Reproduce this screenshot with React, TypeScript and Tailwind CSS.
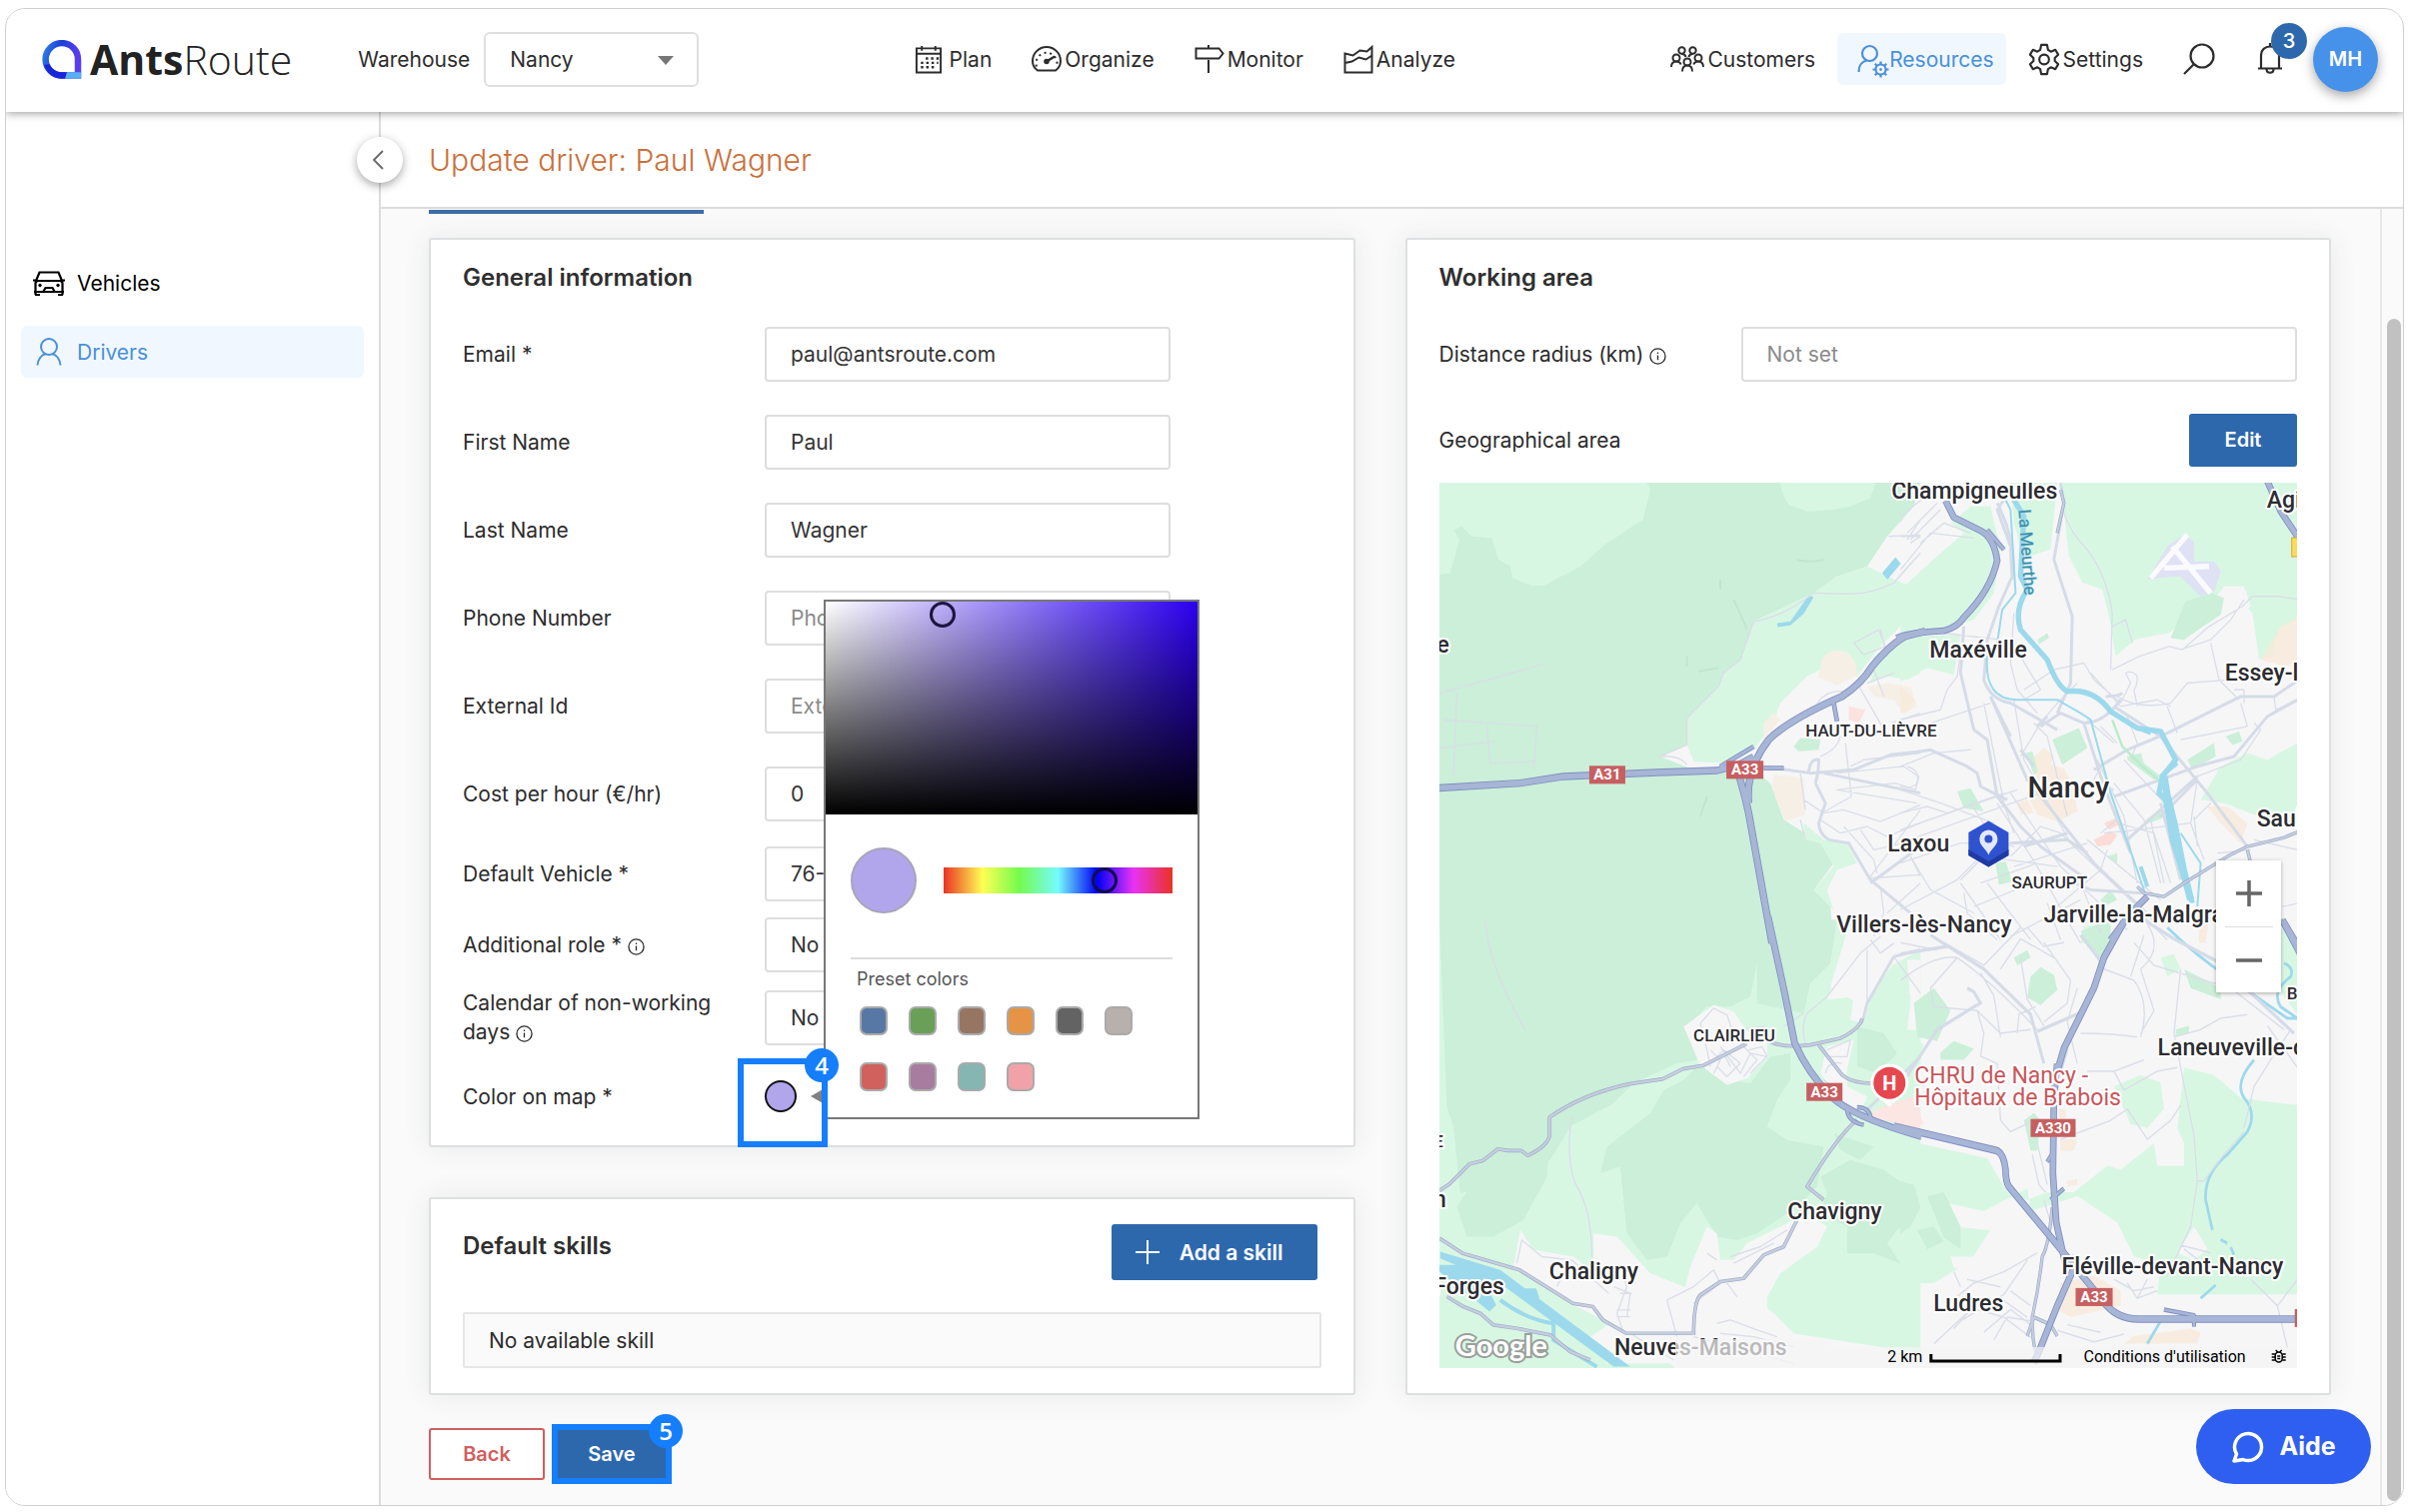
import React from "react";

type IconProps = { className?: string };

function CalendarIcon({ className }: IconProps) {
  return (
    <svg viewBox="0 0 28 30" className={className} fill="none" stroke="currentColor" strokeWidth="2">
      <path d="M1.5 3.5h25v25h-25zM1.5 9h25M7 1v5M21 1v5" />
      <path d="M11 14h14M6 18.500h18M6 23h14" strokeDasharray="2.500 3" strokeWidth="2.500" />
    </svg>
  );
}

function GaugeIcon({ className }: IconProps) {
  return (
    <svg viewBox="0 0 30 26" className={className} fill="none" stroke="currentColor" strokeWidth="2">
      <path d="M6 24.500C2.500 22 1 18.500 1 15a14 14 0 0 1 28 0c0 3.500-1.500 7-5 9.500z" />
      <path d="M5 20.500a10.500 10.500 0 1 1 20 0" strokeDasharray="2 3.700" />
      <path d="M15 15.500 23 10.500" strokeWidth="2.500" />
      <circle cx="15" cy="15.500" r="1.800" fill="currentColor" />
    </svg>
  );
}

function SignpostIcon({ className }: IconProps) {
  return (
    <svg viewBox="0 0 30 28" className={className} fill="none" stroke="currentColor" strokeWidth="2">
      <path d="M1.500 3.500h23l4 5-4 5h-23zM14 0v3.500M14 15v13" />
    </svg>
  );
}

function AreaChartIcon({ className }: IconProps) {
  return (
    <svg viewBox="0 0 30 30" className={className} fill="none" stroke="currentColor" strokeWidth="2">
      <path d="M1.500 9.500v19h27V3l-5 4.500-7-1-7 5zM1.500 19l7-1.500 7-4 7 2 6-4" />
    </svg>
  );
}

function PeopleIcon({ className }: IconProps) {
  return (
    <svg viewBox="0 0 34 26" className={className} fill="none" stroke="currentColor" strokeWidth="2">
      <circle cx="11.500" cy="4.500" r="3.200" />
      <circle cx="22.500" cy="4.500" r="3.200" />
      <circle cx="6" cy="12" r="3.500" />
      <circle cx="28" cy="12" r="3.500" />
      <circle cx="17" cy="16" r="3.500" />
      <path d="M1 21c0-3.500 2-5.500 5-5.500 2.200 0 4 1.200 4.700 3M33 21c0-3.500-2-5.500-5-5.500-2.200 0-4 1.200-4.700 3M12 25.500c0-4 2-6 5-6s5 2 5 6M11.500 8c1.800 0 3.500.8 4 3M22.500 8c-1.800 0-3.500.8-4 3" />
    </svg>
  );
}

function PersonGearIcon({ className }: IconProps) {
  return (
    <svg viewBox="0 0 32 34" className={className} fill="none" stroke="currentColor" strokeWidth="2.200">
      <circle cx="12.500" cy="9.500" r="7.500" />
      <path d="M1.500 28c0-6 3-10.500 8-11.500" />
      <circle cx="23.500" cy="25.500" r="5" />
      <circle cx="23.500" cy="25.500" r="1" fill="currentColor" strokeWidth="1" />
      <path d="M23.500 17.500v3M23.500 30.500v3M15.500 25.500h3M28.500 25.500h3M17.800 19.800l2.200 2.200M27 29l2.200 2.200M29.200 19.800 27 22M20 29l-2.200 2.200" />
    </svg>
  );
}

function GearIcon({ className }: IconProps) {
  return (
    <svg viewBox="0 0 32 34" className={className} fill="none" stroke="currentColor" strokeWidth="2.200" strokeLinejoin="round">
      <path d="M13 2h6l1 5 3 2 4.500-2 3 5-3.500 3.500v3L30.500 22l-3 5-4.500-2-3 2-1 5h-6l-1-5-3-2-4.500 2-3-5L5 18.500v-3L1.500 12l3-5L9 9l3-2z" />
      <circle cx="16" cy="17" r="5" />
    </svg>
  );
}

function SearchIcon({ className }: IconProps) {
  return (
    <svg viewBox="0 0 32 32" className={className} fill="none" stroke="currentColor" strokeWidth="2.200">
      <circle cx="19" cy="13" r="11.500" />
      <path d="M10.500 21.500 1 31" />
    </svg>
  );
}

function BellIcon({ className }: IconProps) {
  return (
    <svg viewBox="0 0 26 32" className={className} fill="none" stroke="currentColor" strokeWidth="2.200">
      <path d="M1 25.500h24M4 25.500V12c0-5 4-8.500 9-8.500s9 3.500 9 8.500v13.500M13 0v3.500M9.500 26c0 5 7 5 7 0" />
    </svg>
  );
}

function CarIcon({ className }: IconProps) {
  return (
    <svg viewBox="0 0 32 25" className={className} fill="none" stroke="currentColor" strokeWidth="2.200">
      <path d="M0 9.500h4M28 9.500h4M3 10 6.500 1.500h19L29 10zM2.500 24V12L4 10h24l1.500 2v12M1 21h30M2 24h5M25 24h5" />
      <path d="M10.500 20.500l2-3.500h7l2 3.500" />
      <circle cx="7" cy="14.500" r="1.300" fill="currentColor" strokeWidth="1" />
      <circle cx="25" cy="14.500" r="1.300" fill="currentColor" strokeWidth="1" />
    </svg>
  );
}

function PersonIcon({ className }: IconProps) {
  return (
    <svg viewBox="0 0 26 28" className={className} fill="none" stroke="currentColor" strokeWidth="2">
      <circle cx="13" cy="9" r="8" />
      <path d="M1.500 27.500c.5-6 4-10.500 8.500-11.500M24.500 27.500c-.5-6-4-10.500-8.500-11.500" />
    </svg>
  );
}

function InfoIcon() {
  return (
    <svg viewBox="0 0 18 18" className="ml-[6px] inline-block h-[17px] w-[17px]" fill="none" stroke="currentColor" strokeWidth="1.400">
      <circle cx="9" cy="9" r="8" />
      <path d="M9 8v5M9 4.800v1.600" />
    </svg>
  );
}

function Logo() {
  return (
    <a href="#" className="flex items-center gap-2">
      <svg viewBox="0 0 40 39" className="h-[39px] w-[40px]" aria-hidden="true">
        <defs>
          <linearGradient id="logo-ring" x1="0" y1="0" x2="1" y2="0.300">
            <stop offset="0" stopColor="#2f7de6" />
            <stop offset="0.450" stopColor="#1c3fd6" />
            <stop offset="1" stopColor="#5b3df0" />
          </linearGradient>
        </defs>
        <path d="M36 35.500H20A16.200 16.200 0 1 1 36 19.300z" fill="none" stroke="url(#logo-ring)" strokeWidth="6.500" />
        <path d="M24 32.300h15.200V38.700H21z" fill="#5aaef6" />
        <path d="M2 25c3 8 9 13 18 13.700h3l2-6.400h-5c-6 0-10-3-12.500-8z" fill="#1a24d8" />
      </svg>
      <span className="font-['Open_Sans'] text-[41px] leading-[48px] text-[#222]">
        <span className="font-bold">Ants</span>
        <span className="font-light">Route</span>
      </span>
    </a>
  );
}

function NavItem({ icon, label, active }: { icon: React.ReactNode; label: string; active?: boolean }) {
  return (
    <a
      href="#"
      className={
        active
          ? "flex h-[52px] items-center rounded-md bg-[#f0f7fe] pr-3 pl-5 text-[#4a90d9]"
          : "flex h-[52px] items-center gap-[3px]"
      }
    >
      {icon}
      <span>{label}</span>
    </a>
  );
}

function Header() {
  return (
    <header className="relative z-20 flex h-[103px] shrink-0 items-center justify-between bg-white pr-[25px] pb-[3px] pl-9 shadow-[0_2px_8px_rgba(0,0,0,0.35)]">
      <div className="flex items-center">
        <Logo />
        <label htmlFor="warehouse" className="ml-[66px]">
          Warehouse
        </label>
        <div className="relative ml-[14px]">
          <select
            id="warehouse"
            className="h-[55px] w-[215px] appearance-none rounded-md border-2 border-[#dfdfdf] bg-white px-6"
          >
            <option>Nancy</option>
          </select>
          <svg viewBox="0 0 16 9" className="pointer-events-none absolute top-6 right-[25px] h-[9px] w-4" fill="#777">
            <path d="M0 0h16L8 9z" />
          </svg>
        </div>
      </div>
      <nav className="flex items-center gap-10">
        <NavItem icon={<CalendarIcon className="mr-1 h-[29px] w-7" />} label="Plan" />
        <NavItem icon={<GaugeIcon className="h-[26px] w-[30px]" />} label="Organize" />
        <NavItem icon={<SignpostIcon className="h-7 w-[30px]" />} label="Monitor" />
        <NavItem icon={<AreaChartIcon className="h-[30px] w-[30px]" />} label="Analyze" />
      </nav>
      <div className="flex items-center">
        <nav className="flex items-center gap-[22px]">
          <NavItem icon={<PeopleIcon className="h-[26px] w-[34px]" />} label="Customers" />
          <NavItem icon={<PersonGearIcon className="mt-1 h-[34px] w-8" />} label="Resources" active />
          <NavItem icon={<GearIcon className="h-[33px] w-[32px]" />} label="Settings" />
        </nav>
        <button type="button" aria-label="Search" className="ml-10">
          <SearchIcon className="h-8 w-8" />
        </button>
        <button type="button" aria-label="Notifications" className="relative ml-[42px]">
          <BellIcon className="h-8 w-[26px]" />
          <span className="absolute -top-[20px] left-[14px] flex h-9 w-9 items-center justify-center rounded-full bg-[#2d68ad] text-[20px] font-medium text-white">
            3
          </span>
        </button>
        <button
          type="button"
          className="ml-[30px] flex h-[65px] w-[65px] items-center justify-center rounded-full bg-[#4692ea] text-[20px] font-semibold text-white shadow-[0_4px_12px_rgba(0,0,0,0.35)]"
        >
          MH
        </button>
      </div>
    </header>
  );
}

function Sidebar() {
  return (
    <aside className="relative w-[375px] shrink-0 border-r-2 border-[#dcdcdc] bg-white px-[15px] pt-[145px]">
      <button
        type="button"
        aria-label="Collapse menu"
        className="absolute top-[25px] -right-6 z-10 flex h-[46px] w-[46px] items-center justify-center rounded-full bg-white shadow-[0_3px_10px_rgba(0,0,0,0.35)]"
      >
        <svg viewBox="0 0 12 20" className="mr-1 h-5 w-3" fill="none" stroke="#666" strokeWidth="1.800">
          <path d="M11 1 2 10l9 9" />
        </svg>
      </button>
      <nav className="flex flex-col gap-[17px] text-black">
        <a href="#" className="flex h-[52px] items-center gap-3 rounded-md px-3">
          <CarIcon className="h-[25px] w-8" />
          Vehicles
        </a>
        <a href="#" className="flex h-[52px] items-center gap-3 rounded-md bg-[#f0f7fe] px-3 text-[#4a90d9]">
          <span className="flex w-8 justify-center">
            <PersonIcon className="h-7 w-[26px]" />
          </span>
          Drivers
        </a>
      </nav>
    </aside>
  );
}

const cardClass =
  "flex flex-col rounded-[3px] border-2 border-[#dedfe1] bg-white px-8 shadow-[0_0_28px_rgba(60,64,80,0.09)]";
const titleClass = "text-[24px] leading-8 font-semibold text-[#2f2f2f]";
const fieldClass =
  "h-[55px] w-full appearance-none rounded-[4px] border-2 border-[#dedede] bg-white px-6 text-[#333] placeholder:text-[#8a8a8a]";

function Field({ id, label, info, children }: { id: string; label: string; info?: boolean; children: React.ReactNode }) {
  return (
    <div className="grid grid-cols-[302px_minmax(0,1fr)] items-center">
      <label htmlFor={id} className="pr-10">
        {label}
        {info && <InfoIcon />}
      </label>
      <div className="pr-[151px]">{children}</div>
    </div>
  );
}

function StepBadge({ n }: { n: number }) {
  return (
    <span className="absolute -top-4 -right-[17px] z-30 flex h-[34px] w-[34px] items-center justify-center rounded-full bg-[#157efb] font-['Open_Sans'] text-[24px] leading-none font-semibold text-white">
      {n}
    </span>
  );
}

const presets = [
  ["#5778a4", "Blue"],
  ["#6a9f58", "Green"],
  ["#967662", "Brown"],
  ["#e49444", "Orange"],
  ["#636363", "Dark gray"],
  ["#b8b0ac", "Gray"],
  ["#d1615d", "Red"],
  ["#a87c9f", "Purple"],
  ["#85b6b2", "Teal"],
  ["#f1a2a9", "Pink"],
];

function ColorPicker() {
  return (
    <div className="absolute bottom-[37px] left-[59px] z-20 w-[376px] border-2 border-[#777] bg-white">
      <svg viewBox="0 0 14 16" className="absolute bottom-[13px] -left-[15px] h-4 w-[14px]" fill="#808080">
        <path d="M14 0v16L0 8z" />
      </svg>
      <div className="relative h-[213px] bg-[linear-gradient(to_top,#000,transparent),linear-gradient(to_right,#fff,#2c00f0)]">
        <span className="absolute top-0 left-[104px] h-[26px] w-[26px] rounded-full border-3 border-[#1c1640]" />
      </div>
      <div className="px-[25px] pb-[26px]">
        <div className="flex items-center gap-[27px] pt-[33px]">
          <span className="h-[66px] w-[66px] shrink-0 rounded-full border-2 border-[#a9a5b5] bg-[#b1a5ec]" />
          <div className="relative h-[26px] flex-1 bg-[linear-gradient(to_right,#ea3323_0%,#ffff54_17%,#75fb4c_33%,#74fbfd_50%,#0000f5_67%,#e932f5_83%,#ea3323_100%)]">
            <span className="absolute top-0 left-[148px] h-[26px] w-[26px] rounded-full border-3 border-[#120c50]" />
          </div>
        </div>
        <div className="mt-[44px] border-t-2 border-[#ddd] pt-2 pl-[6px] text-[18px] leading-6 text-[#555]">Preset colors</div>
        <div className="mt-[15px] grid grid-cols-[repeat(6,28px)] gap-x-[21px] gap-y-[27px] pl-[9px]">
          {presets.map(([color, name]) => (
            <button
              key={name}
              type="button"
              aria-label={name}
              className="h-[29px] rounded-[7px] border-2 border-[#aaa]"
              style={{ backgroundColor: color }}
            />
          ))}
        </div>
      </div>
    </div>
  );
}

function GeneralInformation() {
  return (
    <section className={cardClass + " pt-[22px] pb-[11px]"}>
      <h2 className={titleClass}>General information</h2>
      <div className="mt-[33px] flex flex-col gap-[33px]">
        <Field id="email" label="Email *">
          <input id="email" className={fieldClass} defaultValue="paul@antsroute.com" />
        </Field>
        <Field id="first" label="First Name">
          <input id="first" className={fieldClass} defaultValue="Paul" />
        </Field>
        <Field id="last" label="Last Name">
          <input id="last" className={fieldClass} defaultValue="Wagner" />
        </Field>
        <Field id="phone" label="Phone Number">
          <input id="phone" className={fieldClass} placeholder="Phone Number" />
        </Field>
        <Field id="external" label="External Id">
          <input id="external" className={fieldClass} placeholder="External Id" />
        </Field>
        <Field id="cost" label="Cost per hour (€/hr)">
          <input id="cost" className={fieldClass} defaultValue="0" />
        </Field>
      </div>
      <div className="mt-[25px] flex flex-col gap-4">
        <Field id="vehicle" label="Default Vehicle *">
          <select id="vehicle" className={fieldClass}>
            <option>76-</option>
          </select>
        </Field>
        <Field id="role" label="Additional role *" info>
          <select id="role" className={fieldClass}>
            <option>No</option>
          </select>
        </Field>
        <Field id="calendar" label="Calendar of non-working days" info>
          <select id="calendar" className={fieldClass}>
            <option>No</option>
          </select>
        </Field>
      </div>
      <div className="mt-3 grid h-[76px] grid-cols-[302px_minmax(0,1fr)] items-center">
        <label htmlFor="color">Color on map *</label>
        <div className="relative h-8">
          <button
            id="color"
            type="button"
            aria-label="Color on map"
            className="h-8 w-8 rounded-full border-2 border-[#111] bg-[#b1a5ec]"
          />
          <div className="absolute -top-[22px] -left-[27px] z-30 h-[89px] w-[90px] border-[6px] border-[#157efb]">
            <StepBadge n={4} />
          </div>
          <div className="absolute top-0 left-0 h-[76px] w-8">
            <ColorPicker />
          </div>
        </div>
      </div>
    </section>
  );
}

function DefaultSkills() {
  return (
    <section className={cardClass + " pt-[25px] pb-[25px]"}>
      <div className="flex items-start justify-between pr-1">
        <h2 className="text-[24px] leading-[44px] font-semibold text-[#2f2f2f]">Default skills</h2>
        <button
          type="button"
          className="flex h-14 items-center gap-5 rounded-[3px] bg-[#2d68ad] pr-[34px] pl-6 font-semibold text-white"
        >
          <svg viewBox="0 0 24 24" className="h-6 w-6" stroke="currentColor" strokeWidth="2">
            <path d="M12 0v24M0 12h24" />
          </svg>
          Add a skill
        </button>
      </div>
      <p className="mt-8 flex h-14 items-center rounded-[2px] border-2 border-[#e6e6e6] bg-[#fafafa] px-6">
        No available skill
      </p>
    </section>
  );
}

const TILE_NW = "translate(-19 -13) scale(0.3333)";
const TILE_NE = "translate(461 -13) scale(0.3333)";
const TILE_SW = "translate(-19 437) scale(0.3333)";
const TILE_SE = "translate(461 437) scale(0.3333 0.3782)";

const streets: { tile: string; minor: string; major: string }[] = [
  {
    tile: TILE_NW,
    minor:
      "M58 670 365 585M70 750l280 20-10 130M200 770l10 110 140-5M58 835l160-20M110 670l-10 250M1300 520l75-40 20 50-65 25zM1380 480l20 80M1310 640l75 130M1500 730l-90 30M1340 640l80-30M1360 600l30 80M1190 700q30-40 80-35M1260 800q-10 40-60 60M1275 820l18 160-80 45M1140 910l15 110M1150 990l60 40M1210 1030l60-10 110 35 120-50M1200 1050l60 40 80-20 60 30 100-40M1290 890l40-20 170-20M1250 910l200-20 45 30-10 40-60-20-175 20 240 40M1270 1070l90 100 10 40M1350 1220l150-200M1350 1225l150-10M1140 1050l15 60M1380 1250l10 80-30 70M1470 1160l30 60M1320 1080l40 60 90-20M1400 1330l100-90M1405 200l95-5M1460 210l40-60M1470 220l30-20M1500 250q-30 30-80 90M800 745v80l-80 35q60-5 80 25M1000 455l-40 115-50 40-15 40-95 95M1000 455q80-10 180-85 100 5 150 0 50-10 90-30l80-90",
    major:
      "M1030 890l140 20 130-10 110-45 90-10M1165 905q5-40 30-35 0 40-10 70M1185 940l30 60-20 60q0 30 30 50l60 10 65 110 120 100M1210 910l290 60M1350 1240l150-110",
  },
  {
    tile: TILE_NE,
    minor:
      "M20 190l90-90M0 300l90-110 130 15M30 210l60-60 30-30M0 200h60M60 220l70-60 80 30M0 140l100-80M190 470l-20 150-30 40-20 60-120 30M130 490l170 20M20 890q40 10 30 50-20 20-50 10M0 960l120 40 160 60M0 1030l80-20 60 20 170-60M0 1080l200-70 150-50M0 1120l250-90 170-60M0 1180l180-60 200 0M30 1160l60 100 130 70M0 1320l170-90 90-90M210 1000l70 110 60 20M210 840l-110 10-100 40M270 700l-180 60-90 40M340 690l30 180M340 430l-10 150 20 80 60 70M360 560l60 100-50 30M370 660l90-60 90-20 30 50 80 70M490 130q20 60 70 110 60 80 75 190l-5 170M635 470l40-20 20 70M635 600l80-40 90-30 40 10 80-70 100-60 30-30 80 0 60 10M840 540l90-30 60-60 40-60M930 520l25 110 60 60M570 610l90 100 110-20 40 20M660 700l30-60-15-30q20-10 35 10 0 30-10 40l10 50M650 680q60 40 160 20l50-60 130-10M800 710l30 80M1020 700l20 70M1120 680l5 40 70-30M1000 660h30v40M1040 770l-200 40M1060 760l20 20-60 90-130 50M890 930l-20 130 40 110M870 1060l-160 20-100 10M930 1000l-50 50M680 740l30 80-20 50M530 640l-60 60-50 60-60 100M400 760l40 40 60 240M370 870l140 250 190 180M560 750l80 70M600 770l50 50M590 870l80 170 40 200M600 890l-20 40 60 30M670 870l150 160M640 940l90 110 50 190M750 1050l40 190M650 1060l110 30 50 150M330 970l150 220 200 190M290 1000l120 190 130 230M340 1190l220-70M330 1160l90-90 60 20 30 30M180 1230l70-70 220 30M240 1240l170-60M180 1240l120 170M220 1310l200-80M260 1240l130 170M330 1400l210-110M470 1310l130-110 20-60M440 1300l40 110M540 1240l60 150M560 1110l220 180M600 1090l60-50M700 1310l100 100M950 1150l100-10M1060 1110l130 30M1145 1310l50-10M880 1040l10 90M190 1270l10 60 90 80M250 700l60 300 30 90",
    major:
      "M290 100q60 120 45 220l-40 90-35 100-10 120q20 60 80 70l140 80M330 60l-40 60 40 110 5 100M480 40l10 60-30 170 55 170-5 200-40 90M190 470l-10 140 40 170 40 30 30 170 70 90 60 60 140 100M410 770l30-30M270 680l60 120M270 680l110 250 200 250 190 180M420 770l60-40 70 30q60 0 110-70M615 680q40 0 50-10M640 710l140 90 140 170 120 160M0 855l90-15 110 50 30 20 10 40 80 40M580 900l100-60 120-50 220-110 100 0 75-50M640 980l250-90 110-30 100-120 90-50M680 1110l210-190M360 840l40 50M550 760l60 190 80 200M780 1040l110-110M370 1130l130-40M330 1120l170-10 60 40M780 1000l60 230M480 1220l90 40 160 10",
  },
  {
    tile: TILE_SW,
    minor:
      "M195 0q10 140 120 330M455 590q-20 120 10 200 50 80 50 220M290 1030l15-70 60 50 90 10 110 100M410 1100l30-60M600 1050l20 50-30 80 20 60M580 1100l50 20-10 70M600 1120h35M590 1170h40M590 1190h40M740 1140l80-40 60-50 20 40-80 60M740 1140l30 110M930 1010l90-30 80-50M940 1030l120-60M890 1210l40-10 80 30 60 20M900 1240l100 10 120 30M920 1090l30 40M1160 280l60-50 100-130 60-50M1160 280q-20 40-5 90M1340 90v160M1420 110l80 110M1350 60l30 40 40-30M1220 390l70-30-10 50h-60M1215 460q10-40 50-30M1210 480l40 30M840 310l40-45 40 20 20 60M870 390l30 30-20 40M900 380l60 80 30-60 50 10M910 400l20 40M880 420l30-30 50 40-40 40-30-30M960 370l50 50-40 50M985 390l40-10 15 30-50 50M840 310l20 80 10 50M940 330l90-10M1090 320l60-40M860 1000l30 20M630 1240l130 80M820 1250l300 80",
    major: "M1420 110l80-20M1420 110l-80 140-15 60M1330 580l170-170",
  },
  {
    tile: TILE_SE,
    minor:
      "M0 160q100-70 170-60 100 60 240 190M170 100l-80 80 10 50 130 10 70 60 90-10M0 60l110 20M230 240l20 60-10 60 50 20 10 150 30 30 70-30M130 60l120 60 110-100M240 140l40 60 20 110M300 130l60-80 100 50M360 100l20 110 50 70M430 60l80 100-10 60-70 50M380 20l50 50 60-10M350 300l5-50 50-20M530 180l-30 90 30 110M610 130l90 30q50 60 20 150M540 300q100 0 170 10M690 150l40-110M740 10q50 70-20 120l40 110-40 60M560 400h80l90-30M640 400l30 50 100-50 60-10M480 580l150-50 50-30 60 80 70-50 30-40M840 130l-20 170 60 270 10 120-20 120-70 130M820 310l80-20 60-30 80-10M890 690h20l60-70 60-60M1030 550l30-110 50-70 60-80M840 860l90 20M850 870l60 40M1050 950l80 70 30 110M1190 950l-60 70M700 60l60 60 230 60 160 110M1100 280l90 110M410 590l30 110M395 620l20 80 20 20M430 740l20 60M160 1080l80-80M100 1120l110-90M150 1010l70-50 90-30 100-50M180 1060l130-70 70-90M160 930l20 40M200 950l100 20M230 1030l80 20 90 60M250 1090l80-60 60 40M280 1110l40-60 70 10M300 1000l80 50M330 980l60 40M470 1085l110 30 90-20M500 1070l100 20M640 950l60 30 60-10M680 960l30 40M740 950l-30 50 60-20",
    major: "M90 40l160 90 140 120 40 130M410 295l130-50M0 90l140-20M0 440l110-150 110-60 20-10-20-30-20-10M730 0l90 50 130 60 230 190M540 40l70 80M500 340l-20 60",
  },
];

const labels: [number, number, string][] = [
  [452, 16, "Champigneulles"],
  [827, 25, "Agi"],
  [490, 175, "Maxéville"],
  [785, 198, "Essey-l"],
  [448, 369, "Laxou"],
  [817, 344, "Saul"],
  [397, 449, "Villers-lès-Nancy"],
  [604, 440, "Jarville-la-Malgra"],
  [718, 572, "Laneuveville-d"],
  [348, 736, "Chavigny"],
  [110, 796, "Chaligny"],
  [175, 872, "Neuves-Maisons"],
  [622, 791, "Fléville-devant-Nancy"],
  [494, 828, "Ludres"],
];

const shields: [number, number, number, string][] = [
  [150, 283, 36, "A31"],
  [287, 278, 37, "A33"],
  [367, 600, 36, "A33"],
  [591, 636, 45, "A330"],
  [636, 805, 37, "A33"],
];

function AreaMap() {
  return (
    <svg
      viewBox="0 0 858 885"
      preserveAspectRatio="xMidYMid slice"
      className="absolute inset-0 h-full w-full font-[Roboto]"
      role="img"
      aria-label="Map of Nancy"
    >
      <rect width="858" height="885" fill="#f6f6f7" />

      <g transform={TILE_NW}>
        <path fill="#cbefd8" d="M58 39H1500l-20 71-80 90-60 90-90 30-70 50-180 85-40 115-50 40-15 40-95 95v80l-80 35 100 40h180l50 40 40 110 80 50 40 20 30 60-60 80 50 50 10 140H58z" />
        <path fill="#d8f7e3" d="M58 39H680l10 21-22 90-108 70-80 70-110 58h-35l-57-23-8-35-35-20-20-65-60-5-30-30-25 10 18 30-28 100-32 5zM1078 39h287l-15 46-60 25-50 10-80 5-55-20-15-25z" />
        <path fill="#d8f7e3" d="M1340 290l-90 30-70 50-180 85-40 115-50 40-15 40-95 95v80l20 50 80 5 100-40 60-80 20-60 80-80 40-20 60 10 50 10 60-80 80-80 70-20V330l-60 16zM1360 560l140-90v140l-40 20-60-10-50 20z" />
        <path fill="#d8f7e3" d="M1150 1060l60 50 70 10 30 60-60 20-30 60 20 60-60-60 60-70-40-70-50-10z" />
        <path fill="#f6efe6" d="M1200 600q0-55 50-58 55 0 60 75l-60 30-60-25zM1060 730l20 20-50 60 0-50zM1060 915l90 10 5 110-60 20-40-100zM1340 650l60-10 70 10 20 60-40 20-30-40-60-10z" />
        <path fill="#f6f6f7" d="M1070 720l100-100 70 30 60 20-200 100z" />
        <path fill="#cbefd8" d="M1120 830l20-25 60 5-5 30-60 5z" />
        <path fill="#fbe3e0" d="M1285 710l50 10-20 40-30-10z" />
        <path fill="#9cd9ec" d="M1070 460l40-5 55-78 15 5-30 50-40 35-38 5zM1385 310l40-48 16 20-40 48z" />
        <path stroke="#bfe5d0" strokeWidth="5" fill="none" d="M940 390q20 40 40 90M1130 270q40 10 80 0M900 330v30M835 605l60-10M860 980l-20 60M800 560v30" />
      </g>
      <g transform={TILE_NE}>
        <path fill="#d8f7e3" d="M0 360l120-110 70-60-40-30 60-50h60l30 130-20 130-60 80-100 30-120 20zM0 500l180-5-20 120-80-20-80 40zM330 39h140l-20 200-60 20-30-20-20-80z" />
        <path fill="#cbefd8" d="M0 39h60l-20 60-40 60z" />
        <path fill="#d8f7e3" d="M480 39h715v410l-60 30-20 80-40 10-20-140-80-80-60 60-110 80-100 20-60 50-20-120-20-80-60-20-40-80z" />
        <path fill="#f6f6f7" d="M970 350l60 0 20 60-60 60-60 50-70 10-50 10 120-80z" />
        <path fill="#cbefd8" d="M855 395l80-25 35 15-10 50-60 40-50 35-40-5zM455 810l80-35 25 60-75 50zM170 965l40-10 40 70-60-10zM285 1180l30-5 20 60-40 10zM410 510l30-20 5 15-30 18zM860 870l80-50 5 40-70 40zM975 800l40-15 10 30-30 10zM680 860l40-10 10 30 50 40-20 10-80-60zM735 1050l50-35v30l-40 15zM620 1160l30-10 0 30zM600 1290l30-30 20 30-40 20zM375 850l20-5 20 60-15 10z" />
        <path fill="#d8f7e3" d="M900 990l60-100 80-40 60 20 90-50v200l-60 40-160-60zM550 1370l60-10 0 60h-70z" />
        <path fill="#dfe1f4" d="M740 330l60-100 50-35 30 20 0 60 60 0 20 30-20 60-40 15-60-60-70 5z" />
        <path stroke="#fafaff" strokeWidth="16" fill="none" d="M750 325l110-130M790 295l135-5M815 230l115 140" />
        <path fill="#f8ead8" fillOpacity="0.800" d="M1080 570l60-100 55-30v130l-40 20zM400 860l30-25 30 20-10 30 40 10 30 60 10 70-60 30-60-20-30-60 30-70zM920 1010l60 0 60 50-20 60-60-60zM0 650l40 40-20 40-20 0zM350 1000l30-10 20 40-40 5z" />
        <path fill="#fbdcd6" d="M580 1110l50-25 20 10-20 30-40 5zM610 1060l35-15 10 20-30 15z" />
      </g>
      <g transform={TILE_SW}>
        <path fill="#d8f7e3" d="M58 0H1290l-60 200 100 60 60-110 110-60V1300l-380-60-60-60-60-50-40-30-170 0-100-40-100-110-70-10 0 160 300 300H58z" />
        <path fill="#cbefd8" d="M58 0H1250l-20 130-60 60-20 90-140-30 0-120 0 0-20 100-60 30-70 0-60 60 30 100-60 10-130 60-60 60-130 70-60 100-100 30-80 50-90 20-20-200-20-60z" />
        <path fill="#cbefd8" d="M190 740l110-60 90-20-10 110-70 130-90 50-80 0-30-90zM690 580l40-70 60-30 60-60 80 60 60 10 60-80 60-10 0 80-40 60-30 80 60 40 110 20-20 120-60 60-120 80-60 20-60-10-60-100-50 60-40 100-60 10-60-80-20-200-60 20 20-80zM1200 770l90-50 100 30 100 70v70l-60 40-30 40 40 60-80-30-80 0v-80l-80-40 20-60zM1310 320l80 20 40 60-60 60-60-20zM1240 640l60 20 60 20-40 40-60-30z" />
        <path fill="#f6f6f7" d="M1290 50l120-20 90 0v60l-80 40-70 100-20 80-40-10 10-70-80 10zM1460 120l40 0v210l-40 0 10-80zM790 320l90-65 60 20 40 60 60-10 0 90-60 60-60 20-80-60zM1200 460l20-80 80-20-20 90 0 50 60 30-20 50-60-40zM280 1040l20-110 40 60 120 20 120 90 20-140 30 80 50 80 110 0 20-80 50-120 30 20 10 80 40 0 40-50 180-90 60 40-30 60-110 80-40 70 0 60 70 60 60 80H560l-50-80 60-40-120-60-100-70z" />
        <path fill="#fbe6e3" d="M1360 570l60-20 80-30v110l-150-40z" />
        <path fill="#9cd9ec" d="M58 1035l100 0 60 40 70 10 20 20 40 0 10 30-60-10-50-40-60-10 40 80-20 20-60-50-90-70zM60 995l180 55 390 290h-50L240 1090 60 1015z" />
        <path stroke="#9cd9ec" strokeWidth="12" fill="none" d="M240 1140q80 60 160 70l0 50 130 80" />
      </g>
      <g transform={TILE_SE}>
        <path fill="#d8f7e3" d="M0 160l30 40-10 90 50 40-10 20-60 20zM0 580l260 50 60 90 60 20 60-20 80 0 100-70 40 10 100-70 10 60 80 0 0-60-20-40 20-160 90 20 80 60 80 10 100 10v500H770l10-80-80-20-50-90-120-70-140 40-10-60-130 60-100-20 0 60 120 10-60 80-110 60H0zM780 100l40-10 20 40-40 20zM640 440l80-30 60 20 10 70-50 50-50-10zM1100 0l90 50v200l-50-60-30-100z" />
        <path fill="#f6f6f7" d="M150 890l90 0-50 30-30 0zM260 930l100-30 60 0-10 60-60 160H120l80-60 50-30zM880 810l40 60-40 30-50-20z" />
        <path fill="#cbefd8" d="M540 30l90-30 0 60-30 60zM390 150l30-25 40 20 10 40-50 40-40-20zM40 220l60-40 50 60-40 80-60-10zM120 350l40-30 60 20-30 30-70 0zM340 100l40-20 10 20-40 20zM825 290l40-10v20l-40 10zM850 130l110 50 0 30-90-30zM0 690l40 10 20 60-30 50-30 20zM80 730l50-10 50 90 0 60-50-30zM50 820l50-10 30 40-50 20zM370 530l30-20 20 20-10 80-20 0z" />
        <path fill="#f8ead8" fillOpacity="0.800" d="M480 960l100-20 80 40 0 40-150 30-40-20zM480 580h50l-10 30-40 0zM500 690l30-5 0 15-30 5zM870 1080l30 10-10 30-220 0 30-20zM475 500h20v30h-20zM895 0h30l-10 60-20 0z" />
        <path fill="#fbe6e3" d="M0 480l40 0 30 60-70 10z" />
        <path stroke="#9cd9ec" strokeWidth="8" fill="none" d="M1060 370q-60 60-30 100 40 40 10 90l-60 60q-70 50-65 120l20 80M960 845l20 10M990 865l10 20M900 1000l45-35M740 1120l40-60M800 20q80 70 180 130l180 110 30 0M1150 115q30 10 20 35-60 40-30 80l50 30" />
      </g>

      {streets.map(({ tile, minor, major }) => (
        <g key={tile} transform={tile} fill="none" strokeLinejoin="round">
          <path d={minor} stroke="#dadee8" strokeWidth="4" />
          <path d={major} stroke="#d5dce7" strokeWidth="9" />
        </g>
      ))}

      <g transform={TILE_NE} fill="none" stroke="#9cd9ec">
        <path strokeWidth="16" strokeLinejoin="round" d="M340 90l30 50-10 180 20 40q-40 60-20 120l80 90q30 80 60 95 80-10 130 60l80 50 70 10 45 85-40 50-10 50 20 20 20 120 60 190" />
        <path strokeWidth="12" d="M780 920l50-40M700 770l50 20" />
        <path strokeWidth="22" d="M790 920l10 60 20 80 30 150 20 80" />
        <path strokeWidth="6" d="M300 60l30 60 15 250-40 50-15 100-30 40q-10 130 90 130l120 0 70 40 30 20 60 220 110 320M840 1090l60 90-10 130" />
        <path strokeWidth="12" d="M720 1190l20 60" />
        <path stroke="#b9ecca" strokeWidth="7" d="M635 750l30 80 60 60 50 40" />
      </g>

      {/* Main roads: a dark casing under a lighter line */}
      {[
        { color: "#9dabcc", extra: 4 },
        { color: "#c6cedd", extra: 0 },
      ].map(({ color, extra }) => (
        <g key={color} fill="none" stroke={color} strokeLinejoin="round">
          <g transform={TILE_SW} strokeWidth={7 + extra}>
            <path d="M58 812l30-20 60-60 40-10 45-35 30 5 40 0 20 15q60-30 65-60v-55q100-70 240-100l100-15 60-30 60-10 130-65M1050 365q40 20 120 10l90-20q60-30 65-60M1195 375l70 90q30 25 90 25M1310 600q-60 50-150 200l50 40M1130 900l-40 80-60 25-60 70-70 10-60 40q-20 20-20 120" />
            <path d="M58 955l70 45 170 50 160 100 60 10 30 40 70 40 200 0M80 1130l50 30 50 20 40 35 70 10 100 20 60 50 60 25" />
          </g>
          <g transform={TILE_NE} strokeWidth={6 + extra}>
            <path d="M1195 1085l-50 20-105 25-60 30-130 80-60 40-60-10-20-20M1040 1140l10 40M480 60l10 40-20 90" />
          </g>
          <g transform={TILE_SE} strokeWidth={6 + extra}>
            <path d="M455 760q-10 100-30 130-10 80-30 160 0 60 10 90M400 1050l50 20 20 30M380 1100l20-50" />
          </g>
        </g>
      ))}
      {[
        { color: "#7f8fc0", extra: 0 },
        { color: "#a7b5d6", extra: -5 },
      ].map(({ color, extra }) => (
        <g key={color} fill="none" stroke={color} strokeLinejoin="round">
          <g transform={TILE_NW} strokeWidth={22 + extra}>
            <path d="M50 955 300 940l130-20 280-12 180-6 60-15 50-25M950 900q20 60 35 130l70 390M985 1000q-10-100 60-190 60-60 220-130 60-40 90-90 60-70 100-90l60-16" />
            <path d="M1240 700l10 55M1030 895l60 0M900 890l100-60" strokeWidth={14 + extra} />
          </g>
          <g transform={TILE_NE} strokeWidth={20 + extra}>
            <path d="M-10 505q20-15 140-22 40-10 60-40 80-80 100-170-10-70-50-90l-80-40-25-50M1100 35l40 90 60 90M1145 1350l60 100M630 1410l60-80 50-50" />
            <path d="M260 180l50 60" strokeWidth={14 + extra} />
          </g>
          <g transform={TILE_SW} strokeWidth={21 + extra}>
            <path d="M1043-10l50 230 30 150q40 90 110 160 60 60 270 120" />
            <path d="M1280 565q0 40 50 50M1310 562q40 0 42 40" strokeWidth={13 + extra} />
          </g>
          <g transform={TILE_SE} strokeWidth={20 + extra}>
            <path d="M-20 545l310 65q20 10 25 50 0 30 10 45l160 170 120 130q40 50 110 50h500M470 400l20-60 90-160 30-80 60-95M470 380l-10 90-3 200 10 130 30 120M520 920l-50 100-50 110-20 40" />
            <path d="M790 1030l90 15 0 30M1140 0l60 100M440 640l20-30M450 740l40-30M490 910l30-20" strokeWidth={12 + extra} />
          </g>
        </g>
      ))}

      <g fontSize="23" fontWeight="500" fill="#2c2c30" stroke="#fff" strokeWidth="4" strokeLinejoin="round" paintOrder="stroke">
        {labels.map(([x, y, name]) => (
          <text key={name} x={x} y={y}>
            {name}
          </text>
        ))}
        <text x="588" y="315" fontSize="29">Nancy</text>
        <text x="10" y="170" textAnchor="end">e</text>
        <text x="7" y="724" textAnchor="end">n</text>
        <text x="65" y="811" textAnchor="end">Forges</text>
        <g fontSize="17">
          <text x="366" y="254">HAUT-DU-LIÈVRE</text>
          <text x="572" y="406">SAURUPT</text>
          <text x="254" y="558">CLAIRLIEU</text>
          <text x="847" y="516">B</text>
          <text x="4" y="664" textAnchor="end">E</text>
        </g>
        <g fill="#c9565a" fontWeight="400">
          <text x="475" y="600">CHRU de Nancy -</text>
          <text x="475" y="622">Hôpitaux de Brabois</text>
        </g>
        <text transform="translate(579 27) rotate(86)" fontSize="17" fontWeight="400" fill="#3c8ca6" stroke="#9cd9ec" strokeWidth="1">
          La Meurthe
        </text>
      </g>

      {shields.map(([x, y, w, name]) => (
        <g key={`${name}-${x}`}>
          <rect x={x} y={y} width={w} height="18" fill="#c65f61" />
          <text x={x + w / 2} y={y + 14} fontSize="15" fontWeight="700" fill="#fff" textAnchor="middle">
            {name}
          </text>
        </g>
      ))}
      <rect x="855" y="826" width="3" height="18" fill="#c65f61" />
      <rect x="852" y="55" width="8" height="19" fill="#fbdb5c" stroke="#d9a93a" />

      <path d="M549 338l20 11.500v23L549 384l-20-11.500v-23z" fill="#2f52cf" />
      <path d="M529 366.500l20 12 20-12v6L549 384l-20-11.500z" fill="#1f3aa3" />
      <path d="M549 372c-3-7-9-9-9-16a9 9 0 0 1 18 0c0 7-6 9-9 16z" fill="#e3e9fb" />
      <circle cx="549" cy="356" r="4" fill="#2f52cf" />

      <path d="M450 624c-4-6-19-11-19-24a19 19 0 0 1 38 0c0 13-15 18-19 24z" fill="#fff" />
      <circle cx="450" cy="600" r="16" fill="#e5484f" />
      <text x="450" y="607" fontSize="20" fontWeight="700" fill="#fff" textAnchor="middle">H</text>

      <rect x="236" y="856" width="154" height="29" fill="#f5f5f5" fillOpacity="0.700" />
      <rect x="390" y="864" width="468" height="21" fill="#f5f5f5" fillOpacity="0.700" />
      <g fontSize="16" fill="#000">
        <text x="448" y="879">2 km</text>
        <text x="644" y="879">Conditions d'utilisation</text>
      </g>
      <path d="M491.500 871v7h129v-7" fill="none" stroke="#000" strokeWidth="3" />
      <g transform="translate(832 866)" fill="none" stroke="#000" strokeWidth="1.500">
        <rect x="3.500" y="3" width="7" height="10" rx="3.500" />
        <path d="M0 5h3.500M10.500 5H14M0 8h3.500M10.500 8H14M0 11h3.500M10.500 11H14M4 1l2 2M10 1 8 3M5.500 7h3M5.500 9.500h3" />
      </g>
      <text x="16" y="873" fontSize="29" fontFamily="Lato" fontWeight="700" fill="#fff" stroke="#9a9f9c" strokeWidth="4" paintOrder="stroke">
        Google
      </text>
    </svg>
  );
}

function WorkingArea() {
  return (
    <section className={cardClass + " pt-[22px] pb-[25px]"}>
      <h2 className={titleClass}>Working area</h2>
      <div className="mt-[33px] grid grid-cols-[302px_minmax(0,1fr)] items-center">
        <label htmlFor="radius">
          Distance radius (km)
          <InfoIcon />
        </label>
        <input id="radius" className={fieldClass} placeholder="Not set" />
      </div>
      <div className="mt-8 flex items-center justify-between">
        <span>Geographical area</span>
        <button type="button" className="h-[53px] w-[108px] rounded-[3px] bg-[#2d68ad] text-[20px] font-semibold text-white">
          Edit
        </button>
      </div>
      <div className="relative mt-4 min-h-0 flex-1 overflow-hidden">
        <AreaMap />
        <div className="absolute right-4 bottom-[376px] flex w-[65px] flex-col items-center bg-white text-[#666] shadow-[0_1px_4px_rgba(0,0,0,0.3)]">
          <button type="button" aria-label="Zoom in" className="flex h-[66px] w-full items-center justify-center">
            <svg viewBox="0 0 26 26" className="h-[26px] w-[26px]" stroke="currentColor" strokeWidth="3.500">
              <path d="M13 0v26M0 13h26" />
            </svg>
          </button>
          <span className="h-px w-12 bg-[#ddd]" />
          <button type="button" aria-label="Zoom out" className="flex h-[65px] w-full items-center justify-center">
            <svg viewBox="0 0 26 26" className="h-[26px] w-[26px]" stroke="currentColor" strokeWidth="3.500">
              <path d="M0 13h26" />
            </svg>
          </button>
        </div>
      </div>
    </section>
  );
}

export default function App() {
  return (
    <div className="flex min-h-screen flex-col bg-white pt-2 pr-[5px] pb-[6px] pl-[5px] font-[Inter,sans-serif] text-[21px] leading-[29px] text-[#2c2c2c]">
      <div className="relative flex flex-1 flex-col overflow-hidden rounded-[20px] border border-[#cfcfcf]">
        <Header />
        <div className="flex flex-1">
          <Sidebar />
          <main className="flex min-w-0 flex-1 flex-col bg-[#fafafa]">
            <div className="flex h-[97px] items-center border-b-2 border-[#dcdcdc] bg-white pl-12">
              <h1 className="text-[30px] leading-9 font-light text-[#c9703a]">Update driver: Paul Wagner</h1>
            </div>
            <div className="flex flex-1">
              <div className="min-w-0 flex-1 pr-[49px] pb-[22px] pl-12">
                <div className="mt-px h-1 w-[275px] bg-[#3b6ea5]" />
                <div className="mt-6 grid grid-cols-2 gap-[50px]">
                  <div className="flex min-w-0 flex-col gap-[50px]">
                    <GeneralInformation />
                    <DefaultSkills />
                  </div>
                  <WorkingArea />
                </div>
                <div className="mt-[33px] flex items-center gap-[13px] text-[20px]">
                  <button
                    type="button"
                    className="h-[52px] w-[116px] rounded-[3px] border-2 border-[#d0605e] bg-white font-semibold text-[#d0605e]"
                  >
                    Back
                  </button>
                  <div className="relative">
                    <button type="button" className="h-[52px] w-[108px] bg-[#2d68ad] font-semibold text-white">
                      Save
                    </button>
                    <div className="pointer-events-none absolute -inset-x-[6px] -inset-y-[4px] border-[6px] border-[#157efb]">
                      <StepBadge n={5} />
                    </div>
                  </div>
                </div>
              </div>
              <div className="w-[23px] shrink-0 border-l-2 border-[#e8e8e8] pt-[110px] pb-1 pl-[5px]">
                <div className="h-full w-[14px] rounded-full bg-[#c1c1c1]" />
              </div>
            </div>
          </main>
        </div>
        <button
          type="button"
          className="absolute right-8 bottom-[21px] z-20 flex h-[75px] w-[175px] items-center justify-center gap-[14px] rounded-full bg-[#2f5ff0] text-[25px] font-bold text-white"
        >
          <svg viewBox="0 0 34 34" className="h-[34px] w-[34px]" fill="none" stroke="currentColor" strokeWidth="3.500" strokeLinejoin="round">
            <path d="M3 31l2.500-7A13.500 13.500 0 1 1 12 29.500z" />
          </svg>
          Aide
        </button>
      </div>
    </div>
  );
}
